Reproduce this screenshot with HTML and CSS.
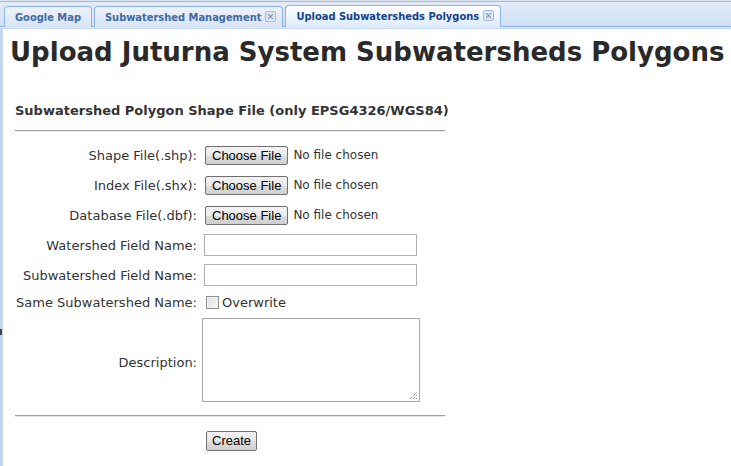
FILE: index.html
```html
<!DOCTYPE html>
<html>
<head>
<meta charset="utf-8">
<link rel="stylesheet" href="styles.css">
</head>
<body>
<div class="app">
  <div class="tabstrip">
    <div class="tab"><span class="tab-text">Google Map</span></div>
    <div class="tab closable"><span class="tab-text">Subwatershed Management</span><span class="close"></span></div>
    <div class="tab closable active"><span class="tab-text">Upload Subwatersheds Polygons</span><span class="close"></span></div>
  </div>
  <div class="spacer"></div>
  <div class="body">
    <span class="handle"></span>
    <h1 class="title">Upload Juturna System Subwatersheds Polygons</h1>
    <div class="section">
      <h2 class="subtitle">Subwatershed Polygon Shape File (only EPSG4326/WGS84)</h2>
      <div class="rule"></div>
      <div class="form">
        <div class="label r-file">Shape File(.shp):</div>
        <div class="ctl r-file"><span class="btn">Choose File</span><span class="nofile">No file chosen</span></div>
        <div class="label r-file">Index File(.shx):</div>
        <div class="ctl r-file"><span class="btn">Choose File</span><span class="nofile">No file chosen</span></div>
        <div class="label r-file">Database File(.dbf):</div>
        <div class="ctl r-file"><span class="btn">Choose File</span><span class="nofile">No file chosen</span></div>
        <div class="label r-text">Watershed Field Name:</div>
        <div class="ctl r-text"><span class="text-input"></span></div>
        <div class="label r-text">Subwatershed Field Name:</div>
        <div class="ctl r-text"><span class="text-input"></span></div>
        <div class="label r-check">Same Subwatershed Name:</div>
        <div class="ctl r-check"><span class="checkbox"></span><span class="check-label">Overwrite</span></div>
        <div class="label r-area">Description:</div>
        <div class="ctl r-area"><span class="textarea"><svg class="grip" width="9" height="9" viewBox="0 0 9 9"><path d="M1 8 L8 1 M4 8 L8 4 M7 8 L8 7" stroke="#555" stroke-width="1" stroke-dasharray="1 1" fill="none"/></svg></span></div>
      </div>
      <div class="rule rule2"></div>
      <div class="actions"><span class="btn create">Create</span></div>
    </div>
  </div>
</div>
</body>
</html>
```
FILE: styles.css
```css
html, body { margin: 0; padding: 0; background: #fff; }
.app { width: 731px; height: 466px; overflow: hidden; }
.tabstrip {
  height: 23px;
  padding: 2px 0 0 4px;
  border-top: 1px solid #dbe4f1;
  background: linear-gradient(#e4ecf8, #cfdff4);
  border-bottom: 1px solid #8db2e3;
  display: flex;
  gap: 2px;
  align-items: flex-end;
  position: relative;
}
.tabstrip::before {
  content: "";
  position: absolute; left: 0; right: 0; top: 0; height: 1px; background: #99bbe8;
}
.tab {
  height: 21px;
  box-sizing: border-box;
  border: 1px solid #8db2e3;
  border-bottom: none;
  border-radius: 4px 4px 0 0;
  background: linear-gradient(#eef3fb, #d7e4f5);
  display: flex;
  align-items: center;
  padding: 1px 10px 0;
  font: bold 11px "DejaVu Sans Condensed", "DejaVu Sans", sans-serif;
  color: #416aa3;
  margin-bottom: -1px;
}
.tab.closable { padding-right: 6px; }
.tab.active {
  height: 22px;
  background: linear-gradient(#ffffff, #deecfd);
  color: #15428b;
  border-bottom: 1px solid #deecfd;
}
.tab-text { white-space: nowrap; }
.close {
  width: 9px; height: 9px;
  margin-left: 4px;
  align-self: flex-start;
  margin-top: 3px;
  border: 1px solid #a9bdd8;
  border-radius: 2px;
  background: #dfe7f3;
  position: relative;
}
.close::before, .close::after {
  content: ""; position: absolute; left: 4px; top: 1px; width: 1px; height: 7px; background: #7a8fb0;
}
.close::before { transform: rotate(45deg); }
.close::after { transform: rotate(-45deg); }
.spacer { height: 1px; background: #deecfd; border-bottom: 1px solid #c8d8ef; }
.body {
  position: relative;
  border-left: 3px solid #c3d6f0;
  height: 440px;
  box-sizing: border-box;
  padding: 4px 0 0 7px;
  color: #333;
  font-family: "DejaVu Sans", Verdana, sans-serif;
}
.handle { position: absolute; left: -3px; top: 300px; width: 2px; height: 6px; background: #444; }
.title {
  margin: 0;
  font: bold 26px "DejaVu Sans", Verdana, sans-serif;
  line-height: 38px;
  white-space: nowrap;
  color: #2a2a2a;
}
.section { padding-left: 5px; width: 430px; }
.subtitle {
  margin: 32px 0 0 0;
  font: bold 13px "DejaVu Sans", Verdana, sans-serif;
  line-height: 16px;
  white-space: nowrap;
  color: #333;
}
.rule { height: 1px; background: #a0a0a0; margin-top: 11px; border-bottom: 1px solid #e8e8e8; }
.form {
  display: grid;
  grid-template-columns: 182px 1fr;
  column-gap: 7px;
  margin-top: 8px;
}
.label {
  text-align: right;
  font-size: 13px;
  color: #333;
  display: flex; align-items: center; justify-content: flex-end;
  white-space: nowrap;
}
.ctl { display: flex; align-items: center; }
.r-file { height: 30px; }
.r-text { height: 30px; }
.r-check { height: 24px; }
.r-area { height: 88px; }
.label.r-area { padding-top: 4px; }
.ctl.r-area { align-items: flex-start; padding-top: 4px; }
.btn {
  display: inline-flex; align-items: center; justify-content: center;
  box-sizing: border-box;
  height: 19px;
  padding: 0 6px;
  border: 1px solid #707070;
  border-radius: 2px;
  background: linear-gradient(#f2f2f2 0%, #ebebeb 50%, #dddddd 51%, #cfcfcf 100%);
  font: 13px "Liberation Sans", Arial, sans-serif;
  color: #000;
  margin-left: 1px;
}
.nofile { margin-left: 5px; font-size: 12px; color: #333; }
.text-input {
  display: block; box-sizing: border-box;
  width: 213px; height: 22px;
  border: 1px solid #b0b0b0;
}
.checkbox {
  display: inline-block; box-sizing: border-box;
  width: 13px; height: 13px; margin-left: 2px;
  border: 1px solid #8f8f8f;
  background: linear-gradient(135deg, #dcdcdc, #fbfbfb);
  box-shadow: inset 0 0 0 1px #f4f4f4;
}
.check-label { font-size: 13px; margin-left: 3px; color: #333; }
.textarea {
  display: block; position: relative; box-sizing: border-box;
  width: 218px; height: 84px; margin-left: -2px;
  border: 1px solid #a9a9a9;
}
.grip { position: absolute; right: 1px; bottom: 1px; }
.rule2 { margin-top: 9px; }
.actions { padding-left: 190px; margin-top: 13px; }
.btn.create { height: 20px; padding: 0 5px; }
```
